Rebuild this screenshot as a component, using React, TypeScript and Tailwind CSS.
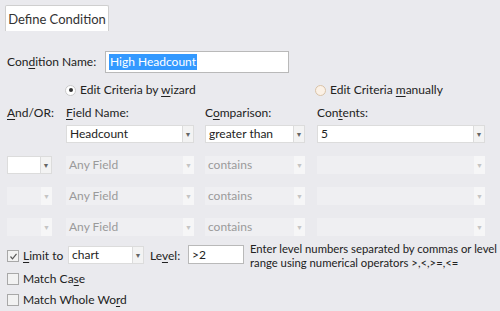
import React from 'react'

const font = { fontFamily: 'Lato, "Noto Sans", sans-serif' }

// label with one underlined mnemonic letter
function Mn({ text, at }: { text: string; at: number }) {
  return (
    <span className="whitespace-nowrap">
      {text.slice(0, at)}
      <span className="underline underline-offset-2">{text[at]}</span>
      {text.slice(at + 1)}
    </span>
  )
}

function Combo({
  width,
  value,
  disabled = false,
}: {
  width: number
  value?: string
  disabled?: boolean
}) {
  return (
    <div className="flex h-[18px] shrink-0" style={{ width }}>
      <div
        className={
          disabled
            ? 'flex-1 flex items-center pl-[3px] bg-[#efeff2] text-[#9a9a9a] whitespace-nowrap'
            : 'flex-1 flex items-center pl-[3px] bg-white border border-[#dcdcdc] text-[#222] whitespace-nowrap'
        }
      >
        {value}
      </div>
      <div
        className={
          disabled
            ? 'w-[11px] flex items-center justify-center bg-[#f6f6f7] text-[#c4c4c4] text-[7px]'
            : 'w-[11px] flex items-center justify-center bg-[#f3f3f3] border-y border-r border-[#dcdcdc] text-[#666] text-[7px]'
        }
      >
        ▼
      </div>
    </div>
  )
}

function Radio({ checked }: { checked: boolean }) {
  return checked ? (
    <div className="w-[11px] h-[11px] shrink-0 rounded-full border border-[#c9c9c9] bg-white flex items-center justify-center">
      <div className="w-[4px] h-[4px] rounded-full bg-[#333]" />
    </div>
  ) : (
    <div className="w-[11px] h-[11px] shrink-0 rounded-full border border-[#d9c3a8] bg-[#fbf1e6]" />
  )
}

function Check({ checked }: { checked: boolean }) {
  return (
    <div className="w-[12px] h-[12px] shrink-0 border border-[#a8a8a8] bg-[#f2f2f2] flex items-center justify-center">
      {checked && (
        <svg width="9" height="9" viewBox="0 0 9 9">
          <path d="M1.5 4.5 L3.5 6.8 L7.5 1.8" fill="none" stroke="#555" strokeWidth="1.2" />
        </svg>
      )}
    </div>
  )
}

export default function App() {
  const rows = [0, 1, 2]
  return (
    <div className="w-[500px] h-[311px] bg-[#eaeaee] text-[12px] leading-[16px] text-[#222] overflow-hidden" style={font}>
      {/* Tab */}
      <div className="pl-[5px] pt-[5px]">
        <div className="w-[104px] h-[26px] bg-white border-t border-x border-[#cfcfcf] rounded-t-[2px] flex items-center justify-center text-[13px] text-[#333] whitespace-nowrap">
          Define Condition
        </div>
      </div>

      <div className="pl-[7px]">
        {/* Condition name */}
        <div className="flex items-center mt-[20px] h-[22px]">
          <div className="w-[98px]">
            <Mn text="Condition Name:" at={3} />
          </div>
          <div className="w-[184px] h-[22px] bg-white border border-[#b9b9b9] flex items-center pl-[3px]">
            <span className="bg-[#3399ff] text-white leading-[16px] px-[1px] whitespace-nowrap">High Headcount</span>
          </div>
        </div>

        {/* Radios */}
        <div className="flex items-center mt-[8px] h-[18px]">
          <div className="ml-[58px] flex items-center gap-[4px] w-[250px] whitespace-nowrap">
            <Radio checked />
            <span>
              Edit Criteria by <Mn text="wizard" at={0} />
            </span>
          </div>
          <div className="flex items-center gap-[4px] whitespace-nowrap">
            <Radio checked={false} />
            <span>
              Edit Criteria <Mn text="manually" at={0} />
            </span>
          </div>
        </div>

        {/* Headers */}
        <div className="flex items-center mt-[5px] h-[18px]">
          <div className="w-[59px]">
            <Mn text="And/OR:" at={0} />
          </div>
          <div className="w-[139px]">
            <Mn text="Field Name:" at={0} />
          </div>
          <div className="w-[112px]">
            <Mn text="Comparison:" at={1} />
          </div>
          <div>
            <Mn text="Contents:" at={3} />
          </div>
        </div>

        {/* Row 1 */}
        <div className="flex items-center mt-[3px]">
          <div className="w-[59px]" />
          <Combo width={128} value="Headcount" />
          <div className="w-[11px]" />
          <Combo width={100} value="greater than" />
          <div className="w-[12px]" />
          <Combo width={168} value="5" />
        </div>

        {/* Rows 2-4 */}
        {rows.map((r) => (
          <div key={r} className="flex items-center mt-[13px]">
            {r === 0 ? <Combo width={45} /> : <Combo width={45} disabled />}
            <div className="w-[14px]" />
            <Combo width={128} value="Any Field" disabled />
            <div className="w-[11px]" />
            <Combo width={100} value="contains" disabled />
            <div className="w-[12px]" />
            <Combo width={168} disabled />
          </div>
        ))}

        {/* Limit to */}
        <div className="flex items-start mt-[6px]">
          <div className="flex items-center gap-[4px] w-[61px] shrink-0 mt-[6px] h-[16px]">
            <Check checked />
            <Mn text="Limit to" at={0} />
          </div>
          <div className="mt-[4px]">
            <Combo width={76} value="chart" />
          </div>
          <div className="ml-[6px] w-[38px] shrink-0 mt-[6px] whitespace-nowrap">
            <Mn text="Level:" at={2} />
          </div>
          <div className="w-[56px] h-[19px] shrink-0 bg-white border border-[#b9b9b9] flex items-center pl-[3px] mt-[3px]">
            &gt;2
          </div>
          <div className="ml-[6px] leading-[14px] text-[11.3px] whitespace-nowrap">
            Enter level numbers separated by commas or level
            <br />
            range using numerical operators &gt;,&lt;,&gt;=,&lt;=
          </div>
        </div>

        <div className="flex items-center gap-[4px] h-[18px]">
          <Check checked={false} />
          <Mn text="Match Case" at={8} />
        </div>
        <div className="flex items-center gap-[4px] mt-[3px] h-[18px]">
          <Check checked={false} />
          <Mn text="Match Whole Word" at={14} />
        </div>
      </div>
    </div>
  )
}
